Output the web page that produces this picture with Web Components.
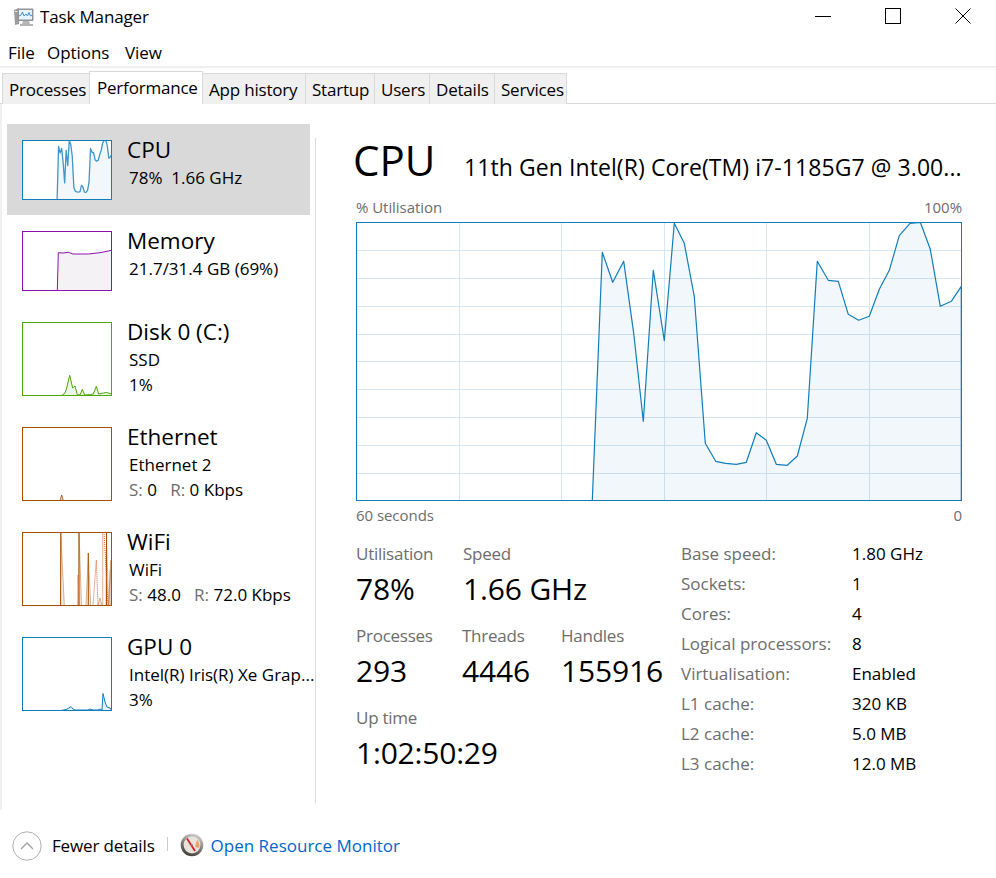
<!DOCTYPE html>
<html>
<head>
<meta charset="utf-8">
<title>Task Manager</title>
<style>
  html, body { margin: 0; background: #fff; }
  body {
    width: 996px;
    height: 878px;
    overflow: hidden;
    font-family: "Open Sans", "Noto Sans", sans-serif;
    color: #000;
  }
</style>
</head>
<body>
<tm-window>
  <tm-titlebar>Task Manager</tm-titlebar>
  <tm-menu>
    <span style="width:39px">File</span>
    <span style="width:78px">Options</span>
    <span>View</span>
  </tm-menu>
  <tm-tabs>
    <tm-tab style="width:87px">Processes</tm-tab>
    <tm-tab active style="width:114px">Performance</tm-tab>
    <tm-tab style="width:103px">App history</tm-tab>
    <tm-tab style="width:69px">Startup</tm-tab>
    <tm-tab style="width:55px">Users</tm-tab>
    <tm-tab style="width:65px">Details</tm-tab>
    <tm-tab style="width:73px">Services</tm-tab>
  </tm-tabs>
  <tm-content>
    <tm-sidebar slot="side">
      <tm-item selected label="CPU" kind="cpu" h="60">
        <div>78%&nbsp;&nbsp;1.66 GHz</div>
      </tm-item>
      <tm-item label="Memory" kind="mem" h="60">
        <div>21.7/31.4 GB (69%)</div>
      </tm-item>
      <tm-item label="Disk 0 (C:)" kind="disk" h="74">
        <div>SSD</div>
        <div>1%</div>
      </tm-item>
      <tm-item label="Ethernet" kind="eth" h="74">
        <div>Ethernet 2</div>
        <div><tm-dim>S:</tm-dim> 0&nbsp;&nbsp;<tm-dim>R:</tm-dim> 0 Kbps</div>
      </tm-item>
      <tm-item label="WiFi" kind="wifi" h="74">
        <div>WiFi</div>
        <div><tm-dim>S:</tm-dim> 48.0&nbsp;&nbsp;<tm-dim>R:</tm-dim> 72.0 Kbps</div>
      </tm-item>
      <tm-item label="GPU 0" kind="gpu" h="74">
        <div>Intel(R) Iris(R) Xe Grap...</div>
        <div>3%</div>
      </tm-item>
    </tm-sidebar>
    <tm-main slot="main"></tm-main>
  </tm-content>
  <tm-footer></tm-footer>
</tm-window>

<script>
// traced from the reference, page coordinates
const CPU_POINTS = [[592.3,500.5],[602.3,252.3],[612.7,282.3],[623.7,261.3],[633.7,333.3],[643.3,421.3],[653.3,270.3],[664.3,340.7],[674.3,223.3],[684.3,243.3],[694.3,296.7],[705.3,443.3],[715.7,461.3],[725.7,463.3],[736.3,464.3],[746.3,462.3],[756.3,432.7],[766.3,440.3],[776.3,464.3],[787.3,465.3],[797.3,456],[807.3,418.3],[817.3,261.3],[828.3,280.3],[838.3,281.3],[848.3,314.3],[858.7,320.3],[869.3,316.3],[879.3,289.3],[889.3,270.3],[899.3,235.7],[910,223.3],[920.3,222.3],[930.3,249.3],[940.3,306.3],[951.3,301.3],[961.3,286.3],[961.3,500.5]];

function toPath(pts) { return pts.map(p => p.join(',')).join(' '); }

const THUMBS = {
  cpu: {
    color: '#117dbb', fill: 'rgba(17,125,187,.06)', width: 1.3, stroke: 'rgba(17,125,187,.8)',
    series: [CPU_POINTS.map(p => [22 + (p[0] - 356) * 90 / 606, 140 + (p[1] - 222) * 60 / 279])],
    top: 140
  },
  mem: {
    color: '#8b12ae', fill: '#f4f2f4', width: 1, top: 231,
    series: [[[57.3,291],[58.3,252.7],[63,253],[68.3,252.3],[73,254],[88.3,254],[100,252.7],[106,251.5],[111.7,250.3],[111.7,291]]]
  },
  disk: {
    color: '#4da60c', fill: 'rgba(77,166,12,.1)', width: 1, top: 322,
    series: [[[61.7,395.5],[65,393],[66.7,388],[69.7,375.3],[72.7,388],[75,386],[77.3,394.7],[80,395],[82.3,389.3],[84.7,395],[90.7,394.5],[93.3,394],[96.3,386.3],[98.7,394],[103.3,393],[106.7,392.5],[111.7,394],[111.7,395.5]]]
  },
  eth: {
    color: '#a74f01', fill: 'rgba(167,79,1,.25)', width: .8, top: 427,
    series: [[[60,500.5],[61.7,495],[63.3,500.5]]]
  },
  wifi: {
    color: '#a74f01', fill: 'rgba(167,79,1,.12)', width: 1, top: 532, stroke: 'rgba(167,79,1,.4)',
    series: [[[60.4,605.5],[60.8,532],[64.3,605.5]],[[78.6,605.5],[79,532],[81.5,605.5]],[[86,605.5],[88.3,553],[90.7,605.5]],[[98,605.5],[100,598],[102,605.5]],[[106,605.5],[106.4,532],[108.5,605.5]],[[108.5,605.5],[111,560],[111,605.5]]],
    dark: [[[60.6,605.5],[60.8,532]],[[79,605.5],[79,532]],[[88.3,605.5],[88.3,553]],[[106.5,605.5],[106.5,532]]],
    dotted: [[[77.6,605.5],[78,575],[79,605.5]],[[93,605.5],[96.3,560],[98,605.5]],[[102.7,605.5],[102.7,532]],[[104,532],[108,605.5]],[[109,605.5],[110,570]]]
  },
  gpu: {
    color: '#117dbb', fill: 'rgba(17,125,187,.1)', width: 1, top: 637,
    series: [[[61,710.5],[66,709.5],[69,708],[71,706.5],[73,709],[75,710],[88,710],[90,709],[93,710],[98,710],[100,709],[102,710],[103,693.5],[105,702],[107,707],[110,708],[111.7,710.5]]]
  }
};

class TmWindow extends HTMLElement {
  connectedCallback() {
    this.attachShadow({ mode: 'open' });
    this.shadowRoot.innerHTML = `
      <style>
        :host { display: flex; flex-direction: column; width: 996px; height: 878px; }
      </style>
      <slot></slot>
    `;
  }
}

class TmTitlebar extends HTMLElement {
  connectedCallback() {
    this.attachShadow({ mode: 'open' });
    this.shadowRoot.innerHTML = `
      <style>
        :host { display: flex; height: 40px; flex: none; }
        .icon { margin: 7px 0 0 13px; width: 21px; height: 20px; flex: none; }
        .text { margin: 5px 0 0 6px; font-size: 17px; line-height: 24px; letter-spacing: -.16px; }
        .controls { margin-left: auto; display: flex; }
        .controls svg { width: 70px; height: 32px; display: block; }
      </style>
      <svg class="icon" viewBox="0 0 21 20">
        <path d="M1 3 L6 1 V17 L2 18 Z" fill="#9c9c9c"/>
        <rect x="2" y="4" width="3" height="1" fill="#e4e4e4"/>
        <rect x="4.5" y="1.5" width="16" height="12.5" rx="1" fill="#8f959b"/>
        <rect x="6" y="3" width="13" height="9.5" fill="#e8f3fb"/>
        <path d="M6 9 L8 8 L9.5 5 L11 9 L13 7 L14.5 9 L16 5.5 L17.5 9 L19 8" fill="none" stroke="#3f8fcf" stroke-width="1"/>
        <path d="M10 14 H16 L17 17 H20 V19 H7 V17 H9 Z" fill="#b5b5b5"/>
      </svg>
      <span class="text"><slot></slot></span>
      <div class="controls">
        <svg viewBox="0 0 70 32"><path d="M0 16.5 H16" stroke="#000" fill="none"/></svg>
        <svg viewBox="0 0 70 32"><rect x="0.5" y="8.5" width="15" height="15" stroke="#000" fill="none"/></svg>
        <svg viewBox="0 0 41 32" style="width:41px"><path d="M0.5 8.5 L15.5 23.5 M15.5 8.5 L0.5 23.5" stroke="#000" fill="none"/></svg>
      </div>
    `;
  }
}

class TmMenu extends HTMLElement {
  connectedCallback() {
    this.attachShadow({ mode: 'open' });
    this.shadowRoot.innerHTML = `
      <style>
        :host {
          display: flex; flex: none; height: 26px; padding-left: 8px;
          border-bottom: 2px solid #f0f0f0;
          font-size: 17px; line-height: 26px; letter-spacing: -.05px;
        }
        ::slotted(span) { display: block; }
      </style>
      <slot></slot>
    `;
  }
}

class TmTabs extends HTMLElement {
  connectedCallback() {
    this.attachShadow({ mode: 'open' });
    this.shadowRoot.innerHTML = `
      <style>
        :host {
          display: flex; flex: none; height: 32px; margin-top: 3px; padding-left: 2px;
          border-bottom: 1px solid #d9d9d9;
        }
      </style>
      <slot></slot>
    `;
  }
}

class TmTab extends HTMLElement {
  connectedCallback() {
    this.attachShadow({ mode: 'open' });
    this.shadowRoot.innerHTML = `
      <style>
        :host {
          display: block; box-sizing: border-box; height: 31px; margin-top: 2px; padding-left: 6px;
          background: #f0f0f0; border: 1px solid #d9d9d9; border-right: 0; border-bottom: 0;
          font-size: 17px; line-height: 32px; letter-spacing: -.2px; white-space: nowrap;
        }
        :host(:last-child) { border-right: 1px solid #d9d9d9; }
        :host([active]) {
          height: 33px; margin-top: 0; background: #fff; position: relative;
          border-right: 1px solid #d9d9d9; margin-right: -1px; line-height: 31px; padding-left: 7px;
        }
      </style>
      <slot></slot>
    `;
  }
}

class TmContent extends HTMLElement {
  connectedCallback() {
    this.attachShadow({ mode: 'open' });
    this.shadowRoot.innerHTML = `
      <style>
        :host { display: flex; flex: none; height: 706px; border-left: 2px solid #f0f0f0; }
        .rule { flex: none; width: 1px; margin: 34px 0 7px; background: #d9d9d9; }
      </style>
      <slot name="side"></slot>
      <div class="rule"></div>
      <slot name="main"></slot>
    `;
  }
}

class TmSidebar extends HTMLElement {
  connectedCallback() {
    this.attachShadow({ mode: 'open' });
    this.shadowRoot.innerHTML = `
      <style>
        :host { display: block; flex: none; box-sizing: border-box; width: 313px; padding: 20px 0 0 5px; }
      </style>
      <slot></slot>
    `;
  }
}

class TmChart extends HTMLElement {
  // viewBox is in page coordinates, so traced points go in as they are
  draw(cfg, x, y, w, h) {
    const fills = cfg.series.map(s =>
      `<polygon points="${toPath(s)}" fill="${cfg.fill}"/>` +
      `<polyline points="${toPath(s)}" fill="none" stroke="${cfg.stroke || cfg.color}" stroke-width="${cfg.width}" stroke-linejoin="round"/>`
    ).join('');
    const dark = (cfg.dark || []).map(s =>
      `<polyline points="${toPath(s)}" fill="none" stroke="${cfg.color}" stroke-width="1"/>`
    ).join('');
    const dots = (cfg.dotted || []).map(s =>
      `<polyline points="${toPath(s)}" fill="none" stroke="#d9622b" stroke-width="1" stroke-dasharray="1 1"/>`
    ).join('');
    const grid = (cfg.vlines || []).map(v => `<path d="M${v + .5} ${y} V${y + h}" />`).join('') +
      (cfg.hlines || []).map(v => `<path d="M${x} ${v + .5} H${x + w}" />`).join('');
    if (!this.shadowRoot) this.attachShadow({ mode: 'open' });
    this.shadowRoot.innerHTML = `
      <style>
        :host { display: block; flex: none; width: ${w}px; height: ${h}px; background: #fff; }
        svg { display: block; }
      </style>
      <svg width="${w}" height="${h}" viewBox="${x} ${y} ${w} ${h}">
        <g stroke="#d6e6f2" fill="none">${grid}</g>
        ${fills}${dark}${dots}
        <rect x="${x + .5}" y="${y + .5}" width="${w - 1}" height="${h - 1}" fill="none" stroke="${cfg.color}"/>
      </svg>
    `;
  }
}

class TmItem extends HTMLElement {
  connectedCallback() {
    const kind = this.getAttribute('kind');
    const h = Number(this.getAttribute('h'));
    this.attachShadow({ mode: 'open' });
    this.shadowRoot.innerHTML = `
      <style>
        :host {
          display: flex; box-sizing: border-box; width: 303px; padding: 16px 0 15px 15px;
          white-space: nowrap;
        }
        :host([selected]) { background: #d9d9d9; }
        .text { margin: -1px 0 -4px 15px; }
        .label { font-size: 22.5px; line-height: 22px; }
        .sub { margin: 4px 0 0 2px; font-size: 17px; }
        ::slotted(div) { line-height: 25px; }
      </style>
      <tm-chart></tm-chart>
      <div class="text">
        <div class="label">${this.getAttribute('label')}</div>
        <div class="sub"><slot></slot></div>
      </div>
    `;
    const cfg = THUMBS[kind];
    this.shadowRoot.querySelector('tm-chart').draw(cfg, 22, cfg.top, 90, h);
  }
}

class TmDim extends HTMLElement {
  connectedCallback() {
    this.attachShadow({ mode: 'open' });
    this.shadowRoot.innerHTML = `
      <style>:host { display: inline; color: #6d6d6d; }</style>
      <slot></slot>
    `;
  }
}

class TmStat extends HTMLElement {
  connectedCallback() {
    this.attachShadow({ mode: 'open' });
    this.shadowRoot.innerHTML = `
      <style>
        :host { display: block; flex: none; height: 82px; }
        .label { font-size: 17px; line-height: 22px; color: #6d6d6d; letter-spacing: -.25px; }
        .value { font-size: 30px; line-height: 40px; margin-top: 4px; letter-spacing: -.15px; }
      </style>
      <div class="label">${this.getAttribute('label')}</div>
      <div class="value"><slot></slot></div>
    `;
  }
}

class TmSpec extends HTMLElement {
  connectedCallback() {
    this.attachShadow({ mode: 'open' });
    this.shadowRoot.innerHTML = `
      <style>
        :host { display: flex; height: 30px; font-size: 17px; line-height: 30px; white-space: nowrap; }
        .label { flex: none; width: 171px; color: #6d6d6d; }
      </style>
      <span class="label">${this.getAttribute('label')}</span>
      <span><slot></slot></span>
    `;
  }
}

class TmMain extends HTMLElement {
  connectedCallback() {
    this.attachShadow({ mode: 'open' });
    this.shadowRoot.innerHTML = `
      <style>
        :host { display: block; flex: none; width: 646px; padding-left: 38px; box-sizing: border-box; white-space: nowrap; }
        .head { display: flex; align-items: baseline; height: 70px; padding-top: 23px; margin-left: -1px; }
        .head .big { font-size: 42px; line-height: 66px; width: 111px; flex: none; }
        .head .model { font-size: 23px; letter-spacing: .08px; }
        .section { margin-left: 2px; width: 606px; }
        .axis { display: flex; justify-content: space-between; font-size: 15px; color: #6d6d6d; line-height: 20px; letter-spacing: -.05px; }
        .axis.top { height: 25px; }
        .axis.bottom { height: 21px; margin-top: 4px; }
        .stats { display: flex; margin: 17px 0 0 2px; }
        .left { flex: none; width: 325px; }
        .row { display: flex; }
        .right { margin-top: -4px; }
      </style>
      <div class="head"><span class="big">CPU</span><span class="model">11th Gen Intel(R) Core(TM) i7-1185G7 @ 3.00...</span></div>
      <div class="section">
        <div class="axis top"><span>% Utilisation</span><span>100%</span></div>
        <tm-chart id="graph"></tm-chart>
        <div class="axis bottom"><span>60 seconds</span><span>0</span></div>
      </div>
      <div class="stats">
        <div class="left">
          <div class="row">
            <tm-stat label="Utilisation" style="width:107px">78%</tm-stat>
            <tm-stat label="Speed">1.66 GHz</tm-stat>
          </div>
          <div class="row">
            <tm-stat label="Processes" style="width:106px">293</tm-stat>
            <tm-stat label="Threads" style="width:99px">4446</tm-stat>
            <tm-stat label="Handles">155916</tm-stat>
          </div>
          <tm-stat label="Up time"><span style="letter-spacing:-.2px">1:02:50:29</span></tm-stat>
        </div>
        <div class="right">
          <tm-spec label="Base speed:">1.80 GHz</tm-spec>
          <tm-spec label="Sockets:">1</tm-spec>
          <tm-spec label="Cores:">4</tm-spec>
          <tm-spec label="Logical processors:">8</tm-spec>
          <tm-spec label="Virtualisation:">Enabled</tm-spec>
          <tm-spec label="L1 cache:">320 KB</tm-spec>
          <tm-spec label="L2 cache:">5.0 MB</tm-spec>
          <tm-spec label="L3 cache:">12.0 MB</tm-spec>
        </div>
      </div>
    `;
    this.shadowRoot.getElementById('graph').draw({
      color: '#117dbb',
      fill: 'rgba(17,125,187,.06)',
      width: 1.2,
      series: [CPU_POINTS],
      vlines: [459, 561, 664, 766, 869],
      hlines: [250, 278, 306, 334, 361, 389, 417, 445, 473]
    }, 356, 222, 606, 279);
  }
}

class TmFooter extends HTMLElement {
  connectedCallback() {
    this.attachShadow({ mode: 'open' });
    this.shadowRoot.innerHTML = `
      <style>
        :host {
          display: flex; align-items: center; flex: none; box-sizing: border-box; height: 68px;
          padding: 3px 0 0 12px; font-size: 17px;
        }
        svg { display: block; flex: none; }
        .text { margin-left: 10px; letter-spacing: -.15px; }
        .sep { width: 1px; height: 14px; background: #ccc; margin: 0 12px 4px 12px; flex: none; }
        .mon { margin: 0 7px 2px 0; }
        a { color: #0066cc; text-decoration: none; }
      </style>
      <svg width="30" height="30" viewBox="0 0 30 30">
        <circle cx="15" cy="15" r="14.2" fill="none" stroke="#b0b0b0" stroke-width="1"/>
        <path d="M9 18 L15 12 L21 18" fill="none" stroke="#a0a0a0" stroke-width="1.3"/>
      </svg>
      <span class="text">Fewer details</span>
      <span class="sep"></span>
      <svg class="mon" width="24" height="24" viewBox="0 0 24 24">
        <defs>
          <linearGradient id="rim" x1="0.7" y1="0" x2="0.3" y2="1">
            <stop offset="0" stop-color="#d6d6d6"/>
            <stop offset=".5" stop-color="#85807b"/>
            <stop offset="1" stop-color="#3c3a38"/>
          </linearGradient>
        </defs>
        <circle cx="12" cy="12" r="11.3" fill="url(#rim)"/>
        <circle cx="12" cy="12" r="8.4" fill="#e9e3dc"/>
        <path d="M17 7 A8 8 0 0 1 19 15 L15 14 Z" fill="#e9a06a"/>
        <path d="M7 5.5 L15 18" stroke="#d3202a" stroke-width="1.8"/>
        <circle cx="12" cy="12" r="1" fill="#8a8580"/>
      </svg>
      <a href="#">Open Resource Monitor</a>
    `;
  }
}

customElements.define('tm-window', TmWindow);
customElements.define('tm-titlebar', TmTitlebar);
customElements.define('tm-menu', TmMenu);
customElements.define('tm-tabs', TmTabs);
customElements.define('tm-tab', TmTab);
customElements.define('tm-content', TmContent);
customElements.define('tm-sidebar', TmSidebar);
customElements.define('tm-chart', TmChart);
customElements.define('tm-item', TmItem);
customElements.define('tm-dim', TmDim);
customElements.define('tm-stat', TmStat);
customElements.define('tm-spec', TmSpec);
customElements.define('tm-main', TmMain);
customElements.define('tm-footer', TmFooter);
</script>
</body>
</html>
